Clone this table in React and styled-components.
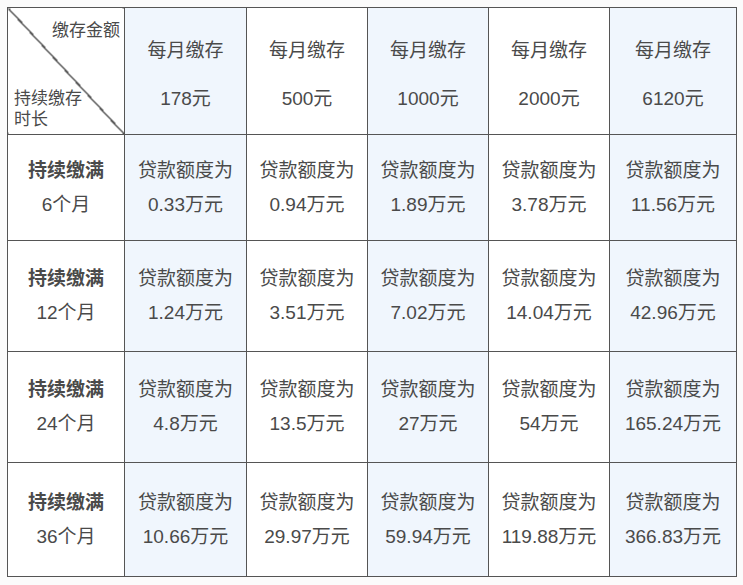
import React from "react"
import styled, {createGlobalStyle} from "styled-components"

const GlobalStyle = createGlobalStyle`
  body {
    margin: 0;
    background: #fbfbfb;
    font-family: "Liberation Sans", "Noto Sans CJK SC", sans-serif;
  }
`

const amounts = ["178元", "500元", "1000元", "2000元", "6120元"]

const rows = [
  {months: "6个月", values: ["0.33", "0.94", "1.89", "3.78", "11.56"]},
  {months: "12个月", values: ["1.24", "3.51", "7.02", "14.04", "42.96"]},
  {months: "24个月", values: ["4.8", "13.5", "27", "54", "165.24"]},
  {months: "36个月", values: ["10.66", "29.97", "59.94", "119.88", "366.83"]},
]

const rowHeights = [106, 111, 111, 114]
const colWidths = [117, 122, 121, 121, 121, 127]

function App() {
  return (
    <Page>
      <GlobalStyle />
      <Table>
        <colgroup>
          {colWidths.map((w, i) => (
            <col key={i} style={{width: w}} />
          ))}
        </colgroup>
        <thead>
          <tr>
            <CornerCell>
              <Corner>
                <CornerTop>缴存金额</CornerTop>
                <CornerBottom>
                  <div>持续缴存</div>
                  <div>时长</div>
                </CornerBottom>
              </Corner>
            </CornerCell>
            {amounts.map((a, i) => (
              <HeadCell key={a} $tint={i % 2 === 0}>
                <HeadStack>
                  <span>每月缴存</span>
                  <span>{a}</span>
                </HeadStack>
              </HeadCell>
            ))}
          </tr>
        </thead>
        <tbody>
          {rows.map((r, ri) => (
            <tr key={r.months} style={{height: rowHeights[ri]}}>
              <RowHead>
                <Line $bold>持续缴满</Line>
                <Line>{r.months}</Line>
              </RowHead>
              {r.values.map((v, i) => (
                <Cell key={i} $tint={i % 2 === 0}>
                  <Line>贷款额度为</Line>
                  <Line>{v}万元</Line>
                </Cell>
              ))}
            </tr>
          ))}
        </tbody>
      </Table>
    </Page>
  )
}

export default App

const Page = styled.div`
  width: 743px;
  height: 585px;
  padding: 7px 0 0 7px;
  box-sizing: border-box;
  background: #fbfbfb;
`

const Table = styled.table`
  border-collapse: collapse;
  table-layout: fixed;
  width: 729px;
  background: #fff;
  border: 1.5px solid #4d4d4d;
  color: #4a4a4a;

  td, th {
    border: 1px solid #555;
    padding: 0;
    text-align: center;
    vertical-align: middle;
  }
`

const CornerCell = styled.th`
  height: 126px;
  background: linear-gradient(
    to top right,
    transparent calc(50% - 0.8px),
    #555 calc(50% - 0.8px),
    #555 calc(50% + 0.8px),
    transparent calc(50% + 0.8px)
  );
`

const Corner = styled.div`
  height: 126px;
  display: flex;
  flex-direction: column;
  justify-content: space-between;
  padding: 12px 4px 4px 6px;
  box-sizing: border-box;
  font-size: 17px;
  font-weight: 400;
  line-height: 21px;
`

const CornerTop = styled.div`
  text-align: right;
`

const CornerBottom = styled.div`
  display: flex;
  flex-direction: column;
  text-align: left;
`

const HeadCell = styled.th`
  font-weight: 400;
  background: ${p => (p.$tint ? "#f0f6fd" : "#fff")};
`

const HeadStack = styled.div`
  display: flex;
  flex-direction: column;
  align-items: center;
  gap: 24px;
  font-size: 19px;
  line-height: 24px;
  padding-top: 8px;
`

const RowHead = styled.td`
  background: #fff;
`

const Cell = styled.td`
  background: ${p => (p.$tint ? "#f0f6fd" : "#fff")};
`

const Line = styled.div`
  font-size: 19px;
  line-height: 34px;
  font-weight: ${p => (p.$bold ? 700 : 400)};
  white-space: nowrap;
`
